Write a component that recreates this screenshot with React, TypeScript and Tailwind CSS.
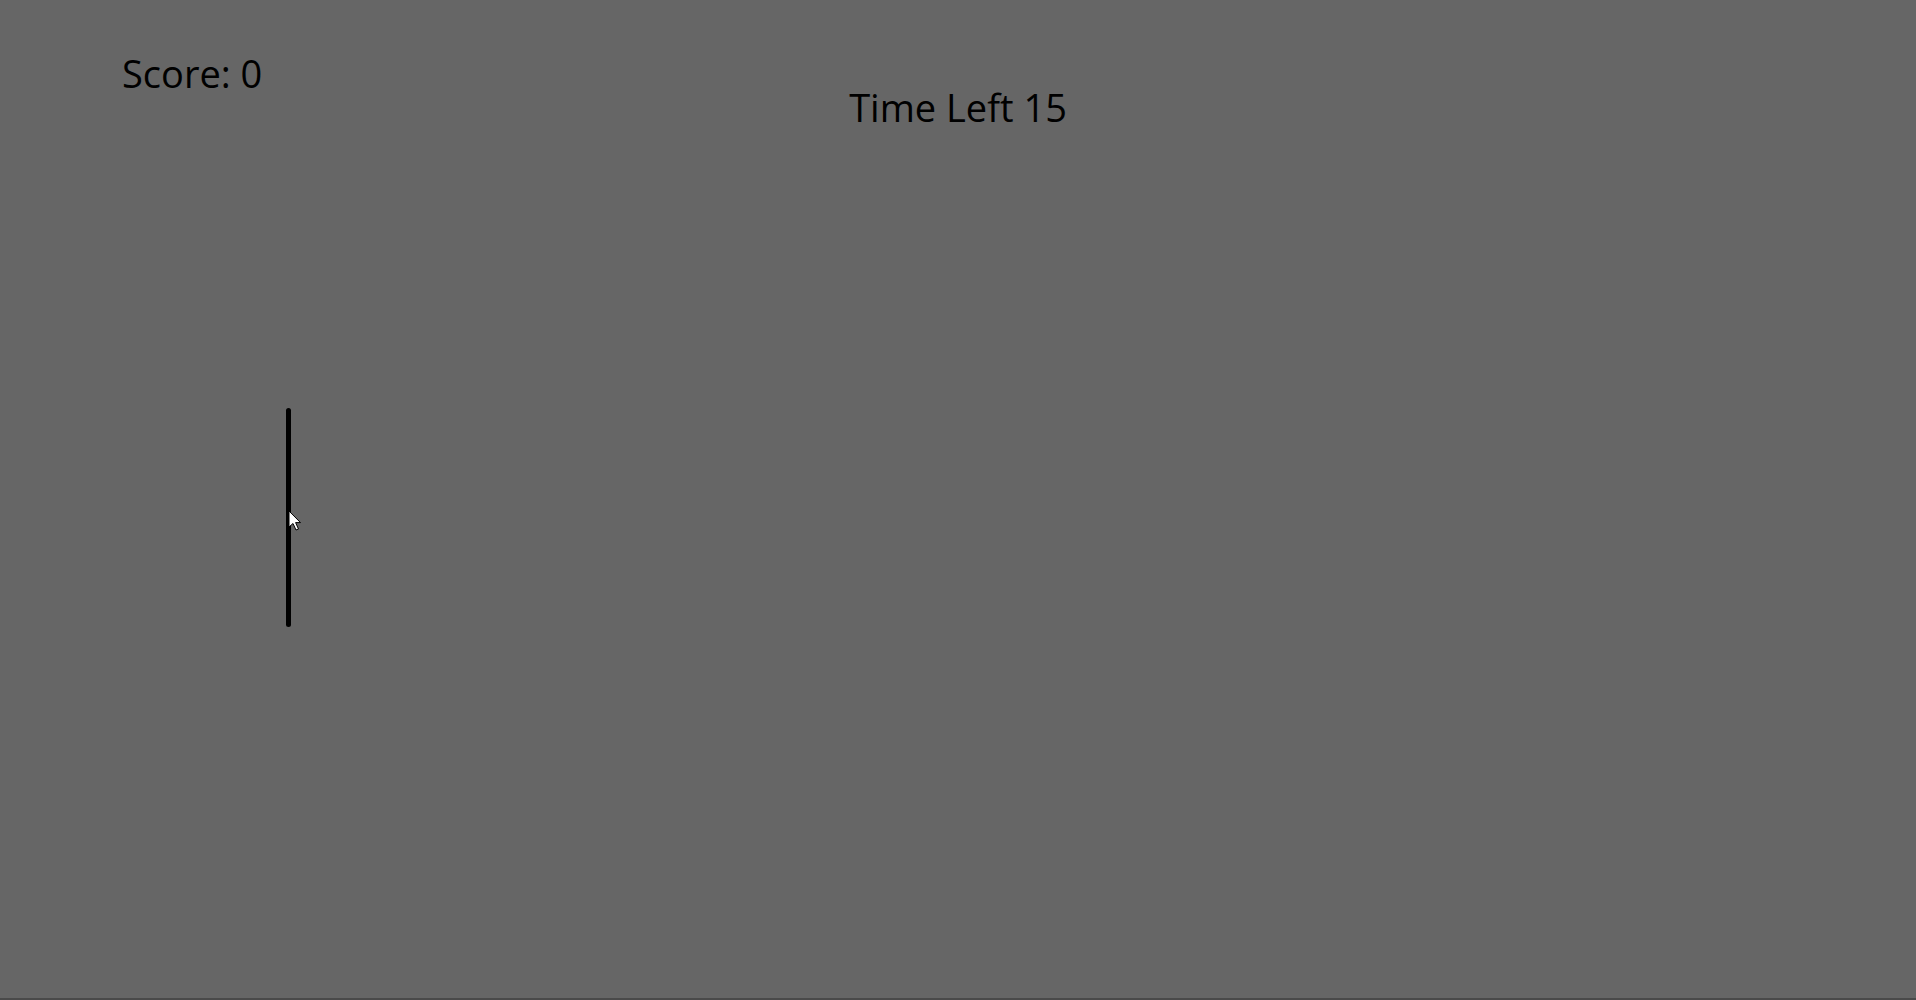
import React from "react";

export default function App() {
  return (
    <div
      className="relative flex h-[1000px] w-full flex-col overflow-hidden border-b-2 border-[#4a4a4a] bg-[#666666] text-black"
      style={{ fontFamily: '"Open Sans", "DejaVu Sans", sans-serif' }}
    >
      <div className="pl-[122px] pt-[54px] text-[38px] leading-[38px]">Score: 0</div>
      <div className="mt-[-4px] text-center text-[38px] leading-[38px]">Time Left 15</div>
      <div className="relative ml-[286px] mt-[282px] h-[219px] w-[5px] rounded-full bg-black">
        <svg
          className="absolute left-[2px] top-[102px]"
          width="14"
          height="22"
          viewBox="0 0 14 22"
        >
          <path
            d="M1 1 L1 17 L5 13.5 L8 20 L10.5 19 L7.6 12.6 L12.5 12.6 Z"
            fill="#ffffff"
            stroke="#000000"
            strokeWidth="1"
            strokeLinejoin="round"
          />
        </svg>
      </div>
    </div>
  );
}
